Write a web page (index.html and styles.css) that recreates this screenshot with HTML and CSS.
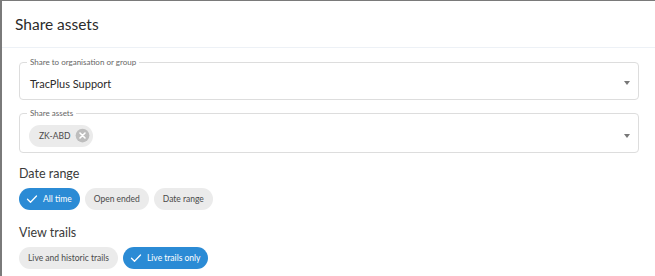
FILE: index.html
```html
<!DOCTYPE html>
<html lang="en">

<head>
    <meta charset="UTF-8">
    <meta name="viewport" content="width=device-width, initial-scale=1.0">
    <title>Share assets</title>
    <link rel="stylesheet" href="styles.css">
</head>

<body>
    <div class="dialog">
        <div class="dialog-title">Share assets</div>
        <div class="dialog-content">
            <fieldset class="field">
                <legend>Share to organisation or group</legend>
                <div class="field-row">
                    <span class="field-value">TracPlus Support</span>
                    <span class="arrow"></span>
                </div>
            </fieldset>

            <fieldset class="field field-chips">
                <legend>Share assets</legend>
                <div class="field-row">
                    <span class="chip chip-deletable">
                        ZK-ABD
                        <svg class="chip-delete" viewBox="0 0 24 24" width="15" height="15">
                            <circle cx="12" cy="12" r="11" fill="#bdbdbd"></circle>
                            <path d="M8 8 L16 16 M16 8 L8 16" stroke="#fff" stroke-width="2.6" stroke-linecap="round"></path>
                        </svg>
                    </span>
                    <span class="arrow"></span>
                </div>
            </fieldset>

            <div class="section-title">Date range</div>
            <div class="chip-row">
                <span class="chip chip-selected">
                    <svg class="check" viewBox="0 0 24 24" width="12" height="12">
                        <path d="M3 12.5 L9 18.5 L21 6" fill="none" stroke="#fff" stroke-width="2.6" stroke-linecap="round" stroke-linejoin="round"></path>
                    </svg>
                    All time
                </span>
                <span class="chip">Open ended</span>
                <span class="chip">Date range</span>
            </div>

            <div class="section-title">View trails</div>
            <div class="chip-row">
                <span class="chip">Live and historic trails</span>
                <span class="chip chip-selected">
                    <svg class="check" viewBox="0 0 24 24" width="12" height="12">
                        <path d="M3 12.5 L9 18.5 L21 6" fill="none" stroke="#fff" stroke-width="2.6" stroke-linecap="round" stroke-linejoin="round"></path>
                    </svg>
                    Live trails only
                </span>
            </div>
        </div>
    </div>
</body>

</html>
```

FILE: styles.css
```css
html,
body {
    height: 100%;
}

body {
    margin: 0;
    background-color: #7a7a7a;
    font-family: Lato, "Open Sans", sans-serif;
    color: #333;
    overflow: hidden;
}

.dialog {
    margin: 1px 0 0 2px;
    height: 100%;
    background-color: #fff;
}

.dialog-title {
    height: 46px;
    padding-left: 13px;
    display: flex;
    align-items: center;
    font-size: 15.5px;
    color: #2b2b2b;
    border-bottom: 1px solid #edf1f6;
}

.dialog-content {
    padding: 10px 16px 0 17px;
    display: flex;
    flex-direction: column;
}

.field {
    margin: 0 0 9px 0;
    padding: 0 8px 0 9px;
    border: 1px solid #dddddd;
    border-radius: 4px;
    min-width: 0;
}

.field-chips {
    margin-bottom: 13px;
}

.field legend {
    font-size: 8px;
    line-height: 9px;
    color: #666;
    padding: 0 3px;
    margin-left: -2px;
}

.field-row {
    height: 32px;
    display: flex;
    align-items: center;
    justify-content: space-between;
}

.field-chips .field-row {
    height: 33px;
    padding-top: 1px;
}

.field-value {
    font-size: 11px;
    color: #2b2b2b;
    padding-left: 1px;
}

.arrow {
    width: 0;
    height: 0;
    border-left: 3.5px solid transparent;
    border-right: 3.5px solid transparent;
    border-top: 4px solid #777;
}

.section-title {
    font-size: 12.5px;
    line-height: 16px;
    color: #3a3a3a;
    margin: 0 0 6px 0;
}

.chip-row {
    display: flex;
    gap: 5px;
    margin-bottom: 15px;
}

.chip {
    height: 22px;
    padding: 0 9px;
    display: inline-flex;
    align-items: center;
    border-radius: 11px;
    background-color: #ebebeb;
    font-size: 8.5px;
    color: #4a4a4a;
}

.chip-selected {
    background-color: #2b8bd5;
    color: #fff;
    padding-left: 6px;
    padding-right: 8px;
    gap: 5px;
}

.check {
    margin: 0 0 0 1px;
}

.chip-deletable {
    padding: 0 3px 0 10px;
    gap: 5px;
    font-size: 8.5px;
}

.chip-delete {
    display: block;
}
```
